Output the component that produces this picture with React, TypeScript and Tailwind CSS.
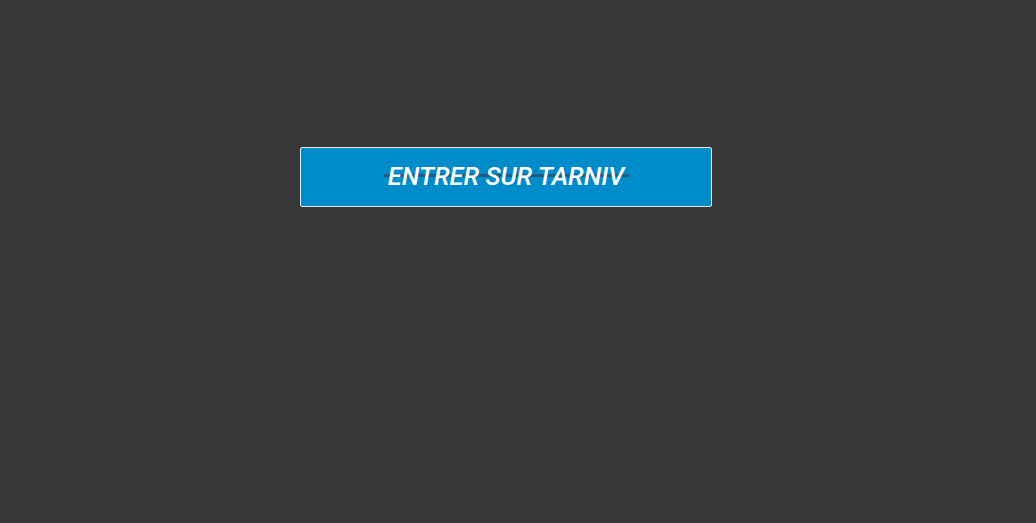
import React from "react";

export default function App() {
  return (
    <div className="w-[1036px] h-[523px] bg-[#373737] pt-[147px] pl-[300px]">
      <button className="relative flex items-center justify-center w-[412px] h-[60px] bg-[#008bcb] border border-[#e6e6e6] rounded-[2px]">
        <span className="absolute left-[83px] right-[82px] top-[26px] h-[3px] bg-[#245a7c]" />
        <span
          className="relative text-white italic font-medium text-[25.5px] leading-none"
          style={{ fontFamily: "Roboto, 'Noto Sans', sans-serif" }}
        >
          ENTRER SUR TARNIV
        </span>
      </button>
    </div>
  );
}
